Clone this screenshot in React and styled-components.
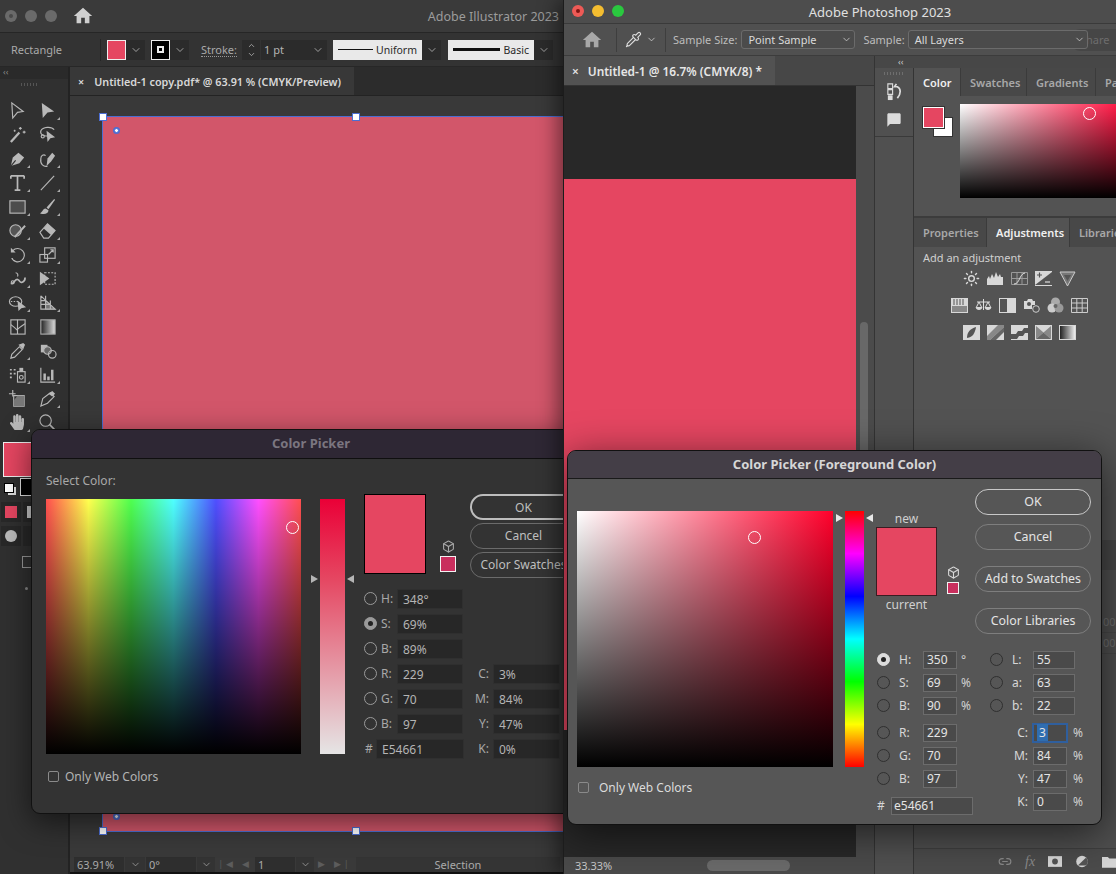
import React from "react";
import styled, { createGlobalStyle } from "styled-components";
import { ChevronDown, ChevronUp, Pipette, Sun, Box, Link2 } from "lucide-react";
import { MdHome, MdChatBubble } from "react-icons/md";
import { FaHandPaper } from "react-icons/fa";

const PINK = "#e54661";

const Global = createGlobalStyle`
  html, body { margin: 0; padding: 0; background: #222; overflow: hidden; }
  body { font-family: "Noto Sans", "Open Sans", sans-serif; font-size: 12px; }
`;

const Desktop = styled.div`
  position: relative;
  width: 1116px;
  height: 874px;
  overflow: hidden;
  background: #222;
`;

/* ---------- bits shared by both apps ---------- */

const Lights = styled.div`
  display: flex;
  gap: ${(p) => p.$gap}px;
`;
const Light = styled.span`
  width: 12px;
  height: 12px;
  border-radius: 50%;
  background: ${(p) => p.$color};
  display: flex;
  align-items: center;
  justify-content: center;
  &::after {
    content: "";
    width: 4px;
    height: 4px;
    border-radius: 50%;
    background: ${(p) => p.$dot || "transparent"};
  }
`;
const Marker = styled.span`
  position: absolute;
  left: ${(p) => p.$x}px;
  top: ${(p) => p.$y}px;
  width: 11px;
  height: 11px;
  margin: -6px 0 0 -6px;
  border: 1px solid #fff;
  border-radius: 50%;
`;
const Arrow = styled.span`
  position: absolute;
  top: ${(p) => p.$top}px;
  ${(p) => (p.$side === "left" ? "left: -9px;" : "right: -9px;")}
  width: 0;
  height: 0;
  border-top: 4px solid transparent;
  border-bottom: 4px solid transparent;
  ${(p) =>
    p.$side === "left"
      ? `border-left: 7px solid ${p.$color};`
      : `border-right: 7px solid ${p.$color};`}
`;

/* ---------- Illustrator window ---------- */

const AiWindow = styled.div`
  position: absolute;
  left: 0;
  top: 0;
  width: 564px;
  height: 874px;
  display: flex;
  flex-direction: column;
  overflow: hidden;
  background: #323232;
  color: #b4b4b4;
`;
const AiTitleBar = styled.div`
  flex: 0 0 33px;
  display: flex;
  align-items: center;
  padding: 0 5px;
  background: #3a3a3a;
  border-bottom: 1px solid #262626;
  box-sizing: border-box;
`;
const AiHome = styled.span`
  display: flex;
  margin-left: 15px;
  color: #cfcfcf;
`;
const AiTitle = styled.span`
  margin-left: auto;
  font-size: 12.5px;
  color: #9c9c9c;
`;
const AiOptions = styled.div`
  flex: 0 0 34px;
  display: flex;
  align-items: center;
  background: #333;
  border-bottom: 1px solid #272727;
  box-sizing: border-box;
  font-size: 11px;
`;
const OptName = styled.span`
  width: 89px;
  margin-left: 11px;
  color: #aaa;
`;
const OptDivider = styled.span`
  width: 1px;
  height: 22px;
  background: #262626;
  margin-right: 6px;
`;
const OptSwatch = styled.span`
  box-sizing: border-box;
  width: 19px;
  height: 20px;
  background: ${(p) => p.$color};
  border: 1px solid #eee;
  display: flex;
  align-items: center;
  justify-content: center;
`;
const StrokeMark = styled.span`
  width: 3px;
  height: 3px;
  background: #000;
  border: 2px solid #eee;
`;
const ChevBox = styled.span`
  width: ${(p) => p.$w || 19}px;
  height: 20px;
  margin-right: ${(p) => p.$mr || 0}px;
  display: flex;
  align-items: center;
  justify-content: center;
  background: #2b2b2b;
  color: #bbb;
`;
const StrokeLabel = styled.span`
  margin: 0 5px 0 6px;
  color: #aaa;
  border-bottom: 1px dotted #999;
  line-height: 13px;
`;
const Spinner = styled.span`
  width: 18px;
  height: 20px;
  background: #2b2b2b;
  display: flex;
  flex-direction: column;
  align-items: center;
  justify-content: center;
  color: #bbb;
`;
const StrokeValue = styled.span`
  width: 47px;
  height: 20px;
  line-height: 19px;
  margin-left: 1px;
  padding-left: 3px;
  box-sizing: border-box;
  background: #2b2b2b;
`;
const Profile = styled.span`
  width: ${(p) => p.$w}px;
  height: 20px;
  display: flex;
  align-items: center;
  justify-content: space-between;
  padding: 0 5px;
  box-sizing: border-box;
  background: #e9e9e9;
  color: #2a2a2a;
  font-size: 10.5px;
`;
const ProfileLine = styled.span`
  width: ${(p) => p.$w}px;
  height: ${(p) => p.$h}px;
  background: #111;
`;
const AiMain = styled.div`
  flex: 1;
  min-height: 0;
  display: flex;
`;
const ToolPanel = styled.div`
  flex: 0 0 68px;
  border-right: 2px solid #232323;
  background: #303030;
  display: flex;
  flex-direction: column;
`;
const Collapse = styled.div`
  height: 12px;
  line-height: 10px;
  padding-left: 3px;
  font-size: 9px;
  color: #888;
  background: #2a2a2a;
`;
const Grip = styled.div`
  width: 18px;
  height: 3px;
  margin: 4px 0 12px 21px;
  background: repeating-linear-gradient(to right, #555 0 1px, transparent 1px 3px);
`;
const ToolGrid = styled.div`
  display: grid;
  grid-template-columns: 30px 30px;
  grid-auto-rows: 24px;
  padding-left: 2px;
`;
const Tool = styled.div`
  position: relative;
  display: flex;
  align-items: center;
  justify-content: center;
  color: #b8b8b8;
  ${(p) =>
    p.$corner &&
    `&::after {
      content: "";
      position: absolute;
      right: 2px;
      bottom: 2px;
      border-left: 3px solid transparent;
      border-bottom: 3px solid #aaa;
    }`}
`;
const ToolSvg = styled.svg`
  width: 19px;
  height: 19px;
  fill: none;
  stroke: currentColor;
  stroke-width: 1.2;
`;
const FillSwatch = styled.div`
  width: 40px;
  height: 33px;
  margin: 8px 0 0 3px;
  background: ${PINK};
  border: 1px solid #eee;
`;
const DefaultRow = styled.div`
  display: flex;
  align-items: flex-start;
  gap: 6px;
  margin: 1px 0 0 4px;
`;
const DefaultIcon = styled.span`
  width: 8px;
  height: 8px;
  margin-top: 5px;
  background: #fff;
  border: 1px solid #000;
  box-shadow: 3px 3px 0 -1px #ddd;
`;
const BlackBox = styled.span`
  width: 14px;
  height: 16px;
  background: #000;
  border: 1px solid #ddd;
`;
const ModeRow = styled.div`
  display: flex;
  gap: 2px;
  margin: ${(p) => p.$mt}px 0 0 1px;
`;
const ModeCell = styled.span`
  width: 20px;
  height: 20px;
  background: #282828;
  display: flex;
  align-items: center;
  justify-content: center;
`;
const ModeChip = styled.span`
  width: 12px;
  height: 12px;
  background: ${(p) => p.$color};
  border-radius: ${(p) => p.$round || 0};
`;
const MiniFrame = styled.span`
  width: 10px;
  height: 10px;
  margin: 10px 0 0 22px;
  border: 1px solid #999;
`;
const MoreDot = styled.span`
  width: 3px;
  height: 3px;
  margin: 19px 0 0 25px;
  border-radius: 50%;
  background: #888;
`;
const AiWork = styled.div`
  flex: 1;
  min-width: 0;
  display: flex;
  flex-direction: column;
`;
const AiTabRow = styled.div`
  flex: 0 0 29px;
  display: flex;
  background: #2c2c2c;
  border-bottom: 1px solid #232323;
  box-sizing: border-box;
`;
const AiTab = styled.div`
  width: 284px;
  display: flex;
  align-items: center;
  gap: 10px;
  padding-left: 8px;
  box-sizing: border-box;
  background: #383838;
  font-size: 10.8px;
  font-weight: 600;
  color: #d8d8d8;
`;
const AiCanvas = styled.div`
  flex: 1;
  min-height: 0;
  overflow: hidden;
  background: #393939;
  padding: 21px 0 0 33px;
`;
const Artboard = styled.div`
  position: relative;
  width: 560px;
  height: 714px;
  background: #d2566a;
  box-shadow: 0 0 0 1px #4c6ed2;
`;
const Handle = styled.span`
  position: absolute;
  left: ${(p) => p.$x}px;
  top: ${(p) => p.$y}px;
  width: 6px;
  height: 6px;
  margin: -4px 0 0 -4px;
  background: #fff;
  border: 1px solid #4c6ed2;
`;
const CenterDot = styled.span`
  position: absolute;
  left: 14px;
  top: ${(p) => p.$y}px;
  margin: -3px 0 0 -3px;
  width: 3px;
  height: 3px;
  border-radius: 50%;
  background: #fff;
  border: 1px solid #4c6ed2;
  box-shadow: 0 0 0 1px #4c6ed2;
`;
const AiStatus = styled.div`
  flex: 0 0 17px;
  display: flex;
  align-items: flex-start;
  gap: 1px;
  padding-left: 4px;
  background: #393939;
  border-bottom: 2px solid #111;
  box-sizing: border-box;
  font-size: 11px;
  color: #aaa;
`;
const StatusField = styled.span`
  width: ${(p) => p.$w}px;
  height: 15px;
  line-height: 16px;
  padding-left: 3px;
  box-sizing: border-box;
  background: #2e2e2e;
`;
const StatusChev = styled.span`
  width: ${(p) => p.$w || 18}px;
  height: 15px;
  display: flex;
  align-items: center;
  justify-content: center;
  background: #333;
`;
const StatusNav = styled.span`
  width: ${(p) => p.$w}px;
  height: 15px;
  line-height: 14px;
  text-align: center;
  font-size: 9px;
  letter-spacing: 3px;
  color: #5c5c5c;
`;
const StatusMode = styled.span`
  flex: 1;
  height: 15px;
  line-height: 16px;
  margin-right: 4px;
  text-align: center;
  background: #343434;
`;

/* ---------- Illustrator colour picker ---------- */

const AiDialog = styled.div`
  position: absolute;
  left: 31px;
  top: 429px;
  width: 560px;
  height: 385px;
  box-sizing: border-box;
  border: 1px solid #111;
  border-radius: 9px;
  background: #333;
  box-shadow: 0 8px 30px rgba(0, 0, 0, 0.55);
  overflow: hidden;
`;
const AiDialogTitle = styled.div`
  height: 28px;
  line-height: 26px;
  text-align: center;
  background: #2e2734;
  border-bottom: 1px solid #0f0f0f;
  font-size: 13px;
  font-weight: 700;
  color: #7b7680;
`;
const AiDialogBody = styled.div`
  display: flex;
  padding-left: 14px;
`;
const AiLeft = styled.div`
  width: 255px;
`;
const AiPrompt = styled.div`
  height: 16px;
  line-height: 16px;
  margin: 14px 0 10px;
  color: #a8a8a8;
`;
const AiField = styled.div`
  position: relative;
  height: 255px;
  background: linear-gradient(to bottom, transparent, #000),
    linear-gradient(
      to right,
      #ff4f4f,
      #ffff4f 16.67%,
      #4fff4f 33.33%,
      #4fffff 50%,
      #4f4fff 66.67%,
      #ff4fff 83.33%,
      #ff4f4f
    );
`;
const WebColors = styled.label`
  display: flex;
  align-items: center;
  gap: ${(p) => p.$gap}px;
  margin: ${(p) => p.$mt}px 0 0 ${(p) => p.$ml}px;
  color: ${(p) => p.$color};
`;
const Check = styled.span`
  width: 9px;
  height: 9px;
  border: 1px solid #8a8a8a;
  border-radius: 2px;
`;
const AiSlider = styled.div`
  position: relative;
  width: 25px;
  height: 255px;
  margin: 40px 0 0 19px;
  background: linear-gradient(to bottom, #ea0037, ${PINK} 31%, #e5e5e5);
`;
const AiRight = styled.div`
  margin-left: 19px;
  padding-top: 35px;
`;
const AiTop = styled.div`
  display: flex;
  height: 92px;
`;
const AiPreview = styled.div`
  box-sizing: border-box;
  width: 62px;
  height: 80px;
  background: ${PINK};
  border: 1px solid #000;
`;
const GamutCol = styled.div`
  width: 16px;
  margin: ${(p) => p.$mt}px 0 0 ${(p) => p.$ml}px;
  display: flex;
  flex-direction: column;
  align-items: center;
  gap: 3px;
  color: ${(p) => p.$color};
`;
const GamutChip = styled.span`
  box-sizing: border-box;
  width: ${(p) => p.$size}px;
  height: ${(p) => p.$size}px;
  background: #c92f5e;
  border: 1px solid #f2f2f2;
`;
const AiButtons = styled.div`
  margin-left: 14px;
  display: flex;
  flex-direction: column;
  gap: 3px;
`;
const AiButton = styled.div`
  box-sizing: border-box;
  width: 107px;
  height: 26px;
  line-height: 23px;
  text-align: center;
  white-space: nowrap;
  border: 1px solid ${(p) => (p.$primary ? "#bdbdbd" : "#6b6b6b")};
  border-width: ${(p) => (p.$primary ? "2px" : "1px")};
  border-radius: 13px;
  color: #bfbfbf;
`;
const AiForm = styled.div`
  display: flex;
`;
const AiCol = styled.div`
  width: ${(p) => p.$w}px;
  padding-top: ${(p) => p.$pt || 0}px;
`;
const AiRow = styled.div`
  height: 25px;
  display: flex;
  align-items: center;
  color: #a8a8a8;
`;
const Radio = styled.span`
  flex: none;
  box-sizing: border-box;
  width: 13px;
  height: 13px;
  border-radius: 50%;
  border: 1px solid ${(p) => p.$line};
  display: flex;
  align-items: center;
  justify-content: center;
  ${(p) =>
    p.$on &&
    `background: ${p.$line};
     &::after { content: ""; width: 5px; height: 5px; border-radius: 50%; background: #222; }`}
`;
const AiLabel = styled.span`
  width: 16px;
  margin-left: 4px;
`;
const AiInput = styled.div`
  box-sizing: border-box;
  width: ${(p) => p.$w}px;
  height: 20px;
  line-height: 19px;
  padding-left: 5px;
  background: #272727;
  border: 1px solid #2f2f2f;
  color: #b4b4b4;
`;
const AiCmykLabel = styled.span`
  width: 25px;
  margin-right: 4px;
  text-align: right;
`;
const AiHash = styled.span`
  width: 11px;
  margin-left: 1px;
`;

/* ---------- Photoshop window ---------- */

const PsWindow = styled.div`
  position: absolute;
  left: 563px;
  top: 0;
  width: 553px;
  height: 874px;
  display: flex;
  flex-direction: column;
  box-sizing: border-box;
  border-left: 1px solid #1c1c1c;
  background: #505050;
  color: #c8c8c8;
  box-shadow: -6px 0 18px rgba(0, 0, 0, 0.45);
  overflow: hidden;
`;
const PsTitleBar = styled.div`
  position: relative;
  flex: 0 0 24px;
  box-sizing: border-box;
  display: flex;
  align-items: center;
  justify-content: center;
  padding-left: 80px;
  background: #4d4d4d;
  border-bottom: 1px solid #3a3a3a;
  font-size: 13px;
  color: #e0e0e0;
`;
const PsLightsSlot = styled.div`
  position: absolute;
  left: 8px;
  top: 5px;
`;
const PsOptions = styled.div`
  position: relative;
  flex: 0 0 32px;
  box-sizing: border-box;
  display: flex;
  align-items: center;
  background: #505050;
  border-bottom: 1px solid #3c3c3c;
  font-size: 11px;
  color: #bdbdbd;
`;
const PsHome = styled.span`
  display: flex;
  margin-left: 17px;
  width: 35px;
  color: #a8a8a8;
`;
const PsDivider = styled.span`
  width: 1px;
  height: 24px;
  background: #3e3e3e;
`;
const PsTool = styled.span`
  display: flex;
  align-items: center;
  margin-left: 8px;
  gap: 4px;
  width: 40px;
  color: #ddd;
`;
const SampleLabel = styled.span`
  margin-left: ${(p) => p.$ml || 0}px;
`;
const PsSelect = styled.span`
  position: relative;
  z-index: 1;
  box-sizing: border-box;
  width: ${(p) => p.$w}px;
  height: 19px;
  margin: 0 ${(p) => p.$mr}px 0 ${(p) => p.$ml}px;
  display: flex;
  align-items: center;
  justify-content: space-between;
  padding: 0 2px 0 6px;
  border: 1px solid #6b6b6b;
  border-radius: 3px;
  background: #4b4b4b;
  color: #dadada;
`;
const Share = styled.span`
  position: absolute;
  right: -14px;
  top: 5px;
  width: 60px;
  height: 22px;
  line-height: 21px;
  padding-left: 10px;
  box-sizing: border-box;
  border-radius: 11px;
  background: #464646;
  color: #6d6d6d;
`;
const PsMain = styled.div`
  flex: 1;
  min-height: 0;
  display: flex;
`;
const PsDoc = styled.div`
  flex: 0 0 310px;
  display: flex;
  flex-direction: column;
  border-right: 1px solid #343434;
`;
const PsTabRow = styled.div`
  flex: 0 0 30px;
  display: flex;
  box-sizing: border-box;
  background: #474747;
  border-bottom: 1px solid #333;
`;
const PsTab = styled.div`
  width: 211px;
  display: flex;
  align-items: center;
  gap: 9px;
  padding-left: 8px;
  box-sizing: border-box;
  background: #525252;
  font-size: 11.9px;
  font-weight: 600;
  color: #e6e6e6;
`;
const PsDocBody = styled.div`
  flex: 1;
  min-height: 0;
  display: flex;
`;
const PsCanvas = styled.div`
  flex: 1;
  padding-top: 93px;
  background: #282828;
`;
const PsArtboard = styled.div`
  height: 551px;
  background: ${PINK};
`;
const PsVScroll = styled.div`
  flex: 0 0 18px;
  padding: 236px 0 0 4px;
  box-sizing: border-box;
  background: #4b4b4b;
`;
const PsVThumb = styled.div`
  width: 8px;
  height: 200px;
  border-radius: 4px;
  background: #686868;
`;
const PsStatus = styled.div`
  flex: 0 0 17px;
  display: flex;
  align-items: center;
  background: #4a4a4a;
  font-size: 11px;
  color: #c8c8c8;
`;
const PsZoom = styled.span`
  width: 132px;
  padding-left: 11px;
`;
const PsHThumb = styled.span`
  width: 83px;
  height: 11px;
  border-radius: 6px;
  background: #6a6a6a;
`;
const PsSide = styled.div`
  flex: 1;
  min-width: 0;
  display: flex;
  flex-direction: column;
`;
const CollapseRow = styled.div`
  flex: 0 0 12px;
  line-height: 11px;
  padding-left: 23px;
  font-size: 9px;
  color: #ccc;
  background: #474747;
`;
const PsSideBody = styled.div`
  flex: 1;
  min-height: 0;
  display: flex;
`;
const PsStrip = styled.div`
  flex: 0 0 39px;
  display: flex;
  flex-direction: column;
  box-sizing: border-box;
  border-right: 1px solid #343434;
  background: #505050;
`;
const StripTop = styled.div`
  height: 69px;
  box-sizing: border-box;
  border-bottom: 1px solid #3a3a3a;
  display: flex;
  flex-direction: column;
  align-items: center;
  color: #dcdcdc;
`;
const StripGrip = styled.div`
  width: 20px;
  height: 3px;
  margin: 4px 0 7px;
  background: repeating-linear-gradient(to right, #6e6e6e 0 1px, transparent 1px 3px);
`;
const StripChat = styled.span`
  display: flex;
  margin-top: 11px;
`;
const PsPanels = styled.div`
  flex: 1;
  min-width: 0;
  display: flex;
  flex-direction: column;
  overflow: hidden;
  background: #535353;
`;
const PanelTabs = styled.div`
  flex: 0 0 ${(p) => p.$h}px;
  display: flex;
  background: #474747;
  white-space: nowrap;
  font-size: 11px;
  font-weight: 600;
`;
const PanelTab = styled.div`
  flex: none;
  width: ${(p) => p.$w}px;
  box-sizing: border-box;
  padding-left: 9px;
  display: flex;
  align-items: center;
  border-right: 1px solid #3b3b3b;
  background: ${(p) => (p.$active ? "#535353" : "#484848")};
  color: ${(p) => (p.$active ? "#f0f0f0" : "#a8a8a8")};
`;
const ColorPanel = styled.div`
  flex: 0 0 122px;
  display: flex;
  box-sizing: border-box;
  padding: 8px 0 0 9px;
  border-bottom: 2px solid #3c3c3c;
`;
const FgBg = styled.div`
  position: relative;
  width: 37px;
  height: 32px;
`;
const Fg = styled.span`
  position: absolute;
  left: 0;
  top: 3px;
  z-index: 1;
  box-sizing: border-box;
  width: 21px;
  height: 21px;
  background: ${PINK};
  border: 1px solid #fff;
  outline: 1px solid #333;
`;
const Bg = styled.span`
  position: absolute;
  left: 11px;
  top: 14px;
  width: 18px;
  height: 18px;
  background: #fff;
  outline: 1px solid #333;
`;
const PanelField = styled.div`
  position: relative;
  width: 156px;
  height: 94px;
  background: linear-gradient(to bottom, transparent, #000),
    linear-gradient(to right, #fff, #ff1c48);
`;
const AdjustPanel = styled.div`
  flex: 0 0 293px;
  box-sizing: border-box;
  padding-left: 9px;
`;
const AdjustTitle = styled.div`
  height: 22px;
  line-height: 22px;
  font-size: 11px;
  color: #d0d0d0;
`;
const AdjustRow = styled.div`
  display: flex;
  justify-content: center;
  gap: 7px;
  padding-right: 1px;
  margin-top: ${(p) => p.$mt}px;
  color: #d8d8d8;
`;
const AdjustCell = styled.div`
  width: 17px;
  height: 17px;
  display: flex;
`;
const AdjSvg = styled.svg`
  width: 17px;
  height: 17px;
  display: block;
  fill: currentColor;
  stroke: currentColor;
  stroke-width: 0;
`;
const LayerBody = styled.div`
  flex: 1;
  min-height: 0;
  padding-top: 42px;
  box-sizing: border-box;
  background: #4f4f4f;
`;
const LayerRow = styled.div`
  height: 20px;
  line-height: 20px;
  padding-left: 189px;
  border-bottom: 1px solid #474747;
  font-size: 11px;
  color: #6e6e6e;
`;
const LayerFooter = styled.div`
  flex: 0 0 26px;
  display: flex;
  align-items: center;
  gap: 13px;
  padding-left: 84px;
  box-sizing: border-box;
  border-top: 1px solid #3f3f3f;
  background: #4b4b4b;
  color: #d6d6d6;
`;
const FooterIcon = styled.span`
  width: 14px;
  display: flex;
  justify-content: center;
  color: ${(p) => p.$color || "inherit"};
  font-family: "Liberation Serif", serif;
  font-style: italic;
  font-size: 14px;
`;

/* ---------- Photoshop colour picker ---------- */

const PsDialog = styled.div`
  position: absolute;
  left: 3px;
  top: 450px;
  width: 535px;
  height: 375px;
  box-sizing: border-box;
  border: 1px solid #111;
  border-radius: 9px;
  background: #565656;
  color: #dcdcdc;
  box-shadow: 0 8px 40px rgba(0, 0, 0, 0.6);
  overflow: hidden;
`;
const PsDialogTitle = styled.div`
  height: 27px;
  line-height: 27px;
  text-align: center;
  background: #443e47;
  border-bottom: 1px solid #1a1a1a;
  font-size: 13px;
  font-weight: 700;
  color: #d6d6d6;
`;
const PsDialogBody = styled.div`
  display: flex;
  padding-left: 9px;
`;
const PsLeft = styled.div`
  width: 256px;
  padding-top: 32px;
`;
const PsField = styled.div`
  position: relative;
  height: 256px;
  background: linear-gradient(to bottom, transparent, #000),
    linear-gradient(to right, #fff, #ff002b);
`;
const PsSlider = styled.div`
  position: relative;
  width: 19px;
  height: 256px;
  margin: 32px 0 0 12px;
  background: linear-gradient(
    to bottom,
    #ff0000,
    #ff00ff 16.67%,
    #0000ff 33.33%,
    #00ffff 50%,
    #00ff00 66.67%,
    #ffff00 83.33%,
    #ff0000
  );
`;
const PsRight = styled.div`
  margin-left: 12px;
`;
const PsTop = styled.div`
  display: flex;
  height: 169px;
`;
const PsPreviewCol = styled.div`
  width: 61px;
  padding-top: 32px;
  text-align: center;
  line-height: 16px;
  color: #d0d0d0;
`;
const PsPreview = styled.div`
  box-sizing: border-box;
  height: 69px;
  margin: 0 0 1px;
  background: ${PINK};
  border: 1px solid #3a1c22;
`;
const PsButtons = styled.div`
  margin: 10px 0 0 14px;
  display: flex;
  flex-direction: column;
`;
const PsButton = styled.div`
  box-sizing: border-box;
  width: 116px;
  height: 26px;
  margin-top: ${(p) => p.$mt || 0}px;
  line-height: 23px;
  text-align: center;
  font-size: 12.4px;
  border: 1px solid ${(p) => (p.$primary ? "#c8c8c8" : "#7e7e7e")};
  border-radius: 13px;
  color: #e4e4e4;
`;
const PsForm = styled.div`
  display: flex;
`;
const PsCol = styled.div`
  box-sizing: border-box;
  width: ${(p) => p.$w}px;
  margin-left: ${(p) => p.$ml || 0}px;
  padding-left: ${(p) => p.$pl || 0}px;
`;
const PsRow = styled.div`
  height: 23px;
  margin-top: ${(p) => p.$mt || 0}px;
  display: flex;
  align-items: center;
  color: #d6d6d6;
`;
const PsLabel = styled.span`
  width: ${(p) => p.$w}px;
  margin-left: ${(p) => p.$ml || 0}px;
  margin-right: ${(p) => p.$mr || 0}px;
  text-align: ${(p) => p.$align || "left"};
`;
const PsInput = styled.div`
  box-sizing: border-box;
  width: ${(p) => p.$w}px;
  height: 18px;
  line-height: 16px;
  padding-left: ${(p) => p.$pl || 3}px;
  background: #4a4a4a;
  border: 1px solid ${(p) => (p.$focus ? "#2f5f9e" : "#6c6c6c")};
  color: #e4e4e4;
  ${(p) => p.$focus && "box-shadow: 0 0 0 1px #2f5f9e;"}
`;
const Selected = styled.span`
  background: #2f6db0;
  padding: 0 2px;
`;
const PsUnit = styled.span`
  margin-left: ${(p) => p.$ml}px;
  color: #d0d0d0;
`;

/* ---------- icons ---------- */

const G = ({ children }) => <ToolSvg viewBox="0 0 20 20">{children}</ToolSvg>;
const solid = { fill: "currentColor", stroke: "none" };

const TOOLS = [
  [<G><path d="M4 2 16 11 10 12 5 18Z" /></G>, false],
  [<G><path d="M4 2 17 11 10 12 5 18Z" {...solid} /></G>, true],
  [<G><path d="M3 18 12 8" strokeWidth="2.4" /><path d="M13 2v3M11.5 3.5h3M17 6v3M15.5 7.5h3M7 5v2M6 6h2" /></G>, false],
  [<G><path d="M12 11C5 13 2 9 3 6c2-4 11-5 14-1" /><circle cx="5" cy="12" r="1.6" /><path d="M9 6 18 13 13 14 10 18Z" {...solid} /></G>, false],
  [<G><path d="M3 18 5 9 11 4l6 5-5 6Z" {...solid} /><path d="M3 18 8 12" stroke="#303030" /></G>, true],
  [<G><path d="M9 18 10 10 15 4l3 3-4 6Z" {...solid} /><path d="M10 18C6 19 2 16 3 10c0-3 3-5 5-3" /></G>, true],
  [<G><path d="M3 3H17M10 3V18M7 18h6M3 3v3M17 3v3" strokeWidth="1.8" /></G>, true],
  [<G><path d="M3 18 17 3" /></G>, true],
  [<G><rect x="2" y="4" width="16" height="13" fill="#4c4c4c" /></G>, true],
  [<G><path d="M17 2 9 11l2 2 7-10Z" {...solid} /><path d="M8 12c-3 0-3 4-6 5 4 2 9 1 9-3Z" {...solid} /></G>, true],
  [<G><circle cx="8" cy="10" r="6" fill="#555" /><path d="M7 17 18 5" strokeWidth="2" /></G>, true],
  [<G><path d="M2 12 10 3l8 7-7 8H6Z" /><path d="M10 3l8 7-4 5-8-7Z" {...solid} /></G>, true],
  [<G><path d="M5 6a7 7 0 1 1-1 8" /><path d="M3 3v5h5" {...solid} /><path d="M4 14l3 3" strokeDasharray="1.5 1.5" /></G>, true],
  [<G><rect x="2" y="10" width="8" height="8" /><rect x="7" y="3" width="11" height="11" /><path d="M11 10l5-5M13 5h3v3" /></G>, true],
  [<G><path d="M3 15c3 2 4-5 7-4s2 4 5 3 3-4 3-5" strokeWidth="1.8" /><circle cx="5" cy="14" r="1.6" /><path d="M8 4c2 0 3 2 2 4" /></G>, true],
  [<G><path d="M2 3 12 10 2 17Z" {...solid} /><rect x="7" y="4" width="11" height="12" strokeDasharray="2 1.5" /></G>, false],
  [<G><ellipse cx="8" cy="9" rx="6.5" ry="5" /><path d="M3 9h8" strokeDasharray="1.5 1.5" /><path d="M10 8 19 15 14 16 11 19Z" {...solid} /></G>, true],
  [<G><path d="M3 3V17H18L3 3M8 3v14M13 8v9M3 8h5M3 12h10" /><path d="M8 8 18 17H8Z" fill="currentColor" opacity=".5" /></G>, true],
  [<G><rect x="3" y="3" width="15" height="15" /><path d="M10 3v15M3 8c4 3 4 3 7 6M18 7c-4 3-5 3-8 6" /></G>, false],
  [<G><defs><linearGradient id="tg"><stop offset="0" stopColor="#222" /><stop offset="1" stopColor="#ddd" /></linearGradient></defs><rect x="3" y="3" width="15" height="15" fill="url(#tg)" stroke="#aaa" /></G>, false],
  [<G><path d="M3 18l1-4 8-8 3 3-8 8Z" /><path d="M11 4l5 5 1-3 1-2-2-2-2 1Z" {...solid} /></G>, true],
  [<G><rect x="3" y="4" width="7" height="8" {...solid} /><circle cx="10" cy="10" r="4" fill="#666" /><circle cx="15" cy="14" r="4" /></G>, false],
  [<G><rect x="10" y="7" width="8" height="11" /><circle cx="14" cy="13" r="2" /><rect x="12" y="3" width="4" height="4" {...solid} /><path d="M2 5h2M6 5h2M2 9h2M6 9h2M2 13h2" strokeWidth="1.8" /></G>, true],
  [<G><path d="M3 3V18H18" /><path d="M7 9V16M11 12V16M15 5V16" strokeWidth="2.6" /></G>, true],
  [<G><path d="M6 7h11v11H6Z" /><path d="M10 7h7v11H6v-6Z" fill="#777" stroke="none" /><path d="M1 5H8M5 1V8" /></G>, false],
  [<G><path d="M3 18l2-8 8-6 4 4-7 7Z" /><path d="M11 5l4-3 3 3-3 3Z" {...solid} /></G>, true],
  [<FaHandPaper size={16} />, true],
  [<G><circle cx="8" cy="8" r="6" /><path d="M12 12l6 6" strokeWidth="1.6" /></G>, false],
];

const A = ({ children }) => <AdjSvg viewBox="0 0 17 17">{children}</AdjSvg>;
const dark = "#545454";

const ADJUST_ROWS = [
  [
    <Sun size={17} />,
    <A><path d="M0 15V9l2-3 1 3 2-5 2 4 2-6 2 5 2-3 1 3 2 0v8Z" /></A>,
    <A><path d="M.5 2.500h16v12H.5ZM6 2.500v12M11 2.500v12M.5 8.500h16" fill="none" stroke="#9a9a9a" strokeWidth="1" /><path d="M3 14c6 0 5-10 11-11" fill="none" stroke="#ddd" strokeWidth="1" /></A>,
    <A><rect y="1" width="17" height="15" /><path d="M17 2 0 15h17Z" fill={dark} /><path d="M2 5h5M4.500 2.500v5" stroke={dark} strokeWidth="1.200" /><path d="M10 12h5" stroke="#ddd" strokeWidth="1.200" /></A>,
    <A><path d="M1 2h15L8.500 16Z" fill="#777" stroke="#ccc" strokeWidth="1" /><path d="M5 5h7L8.500 11Z" fill="#555" /></A>,
  ],
  [
    <A><rect y="1" width="17" height="15" /><path d="M3 2v6M6 2v6M9 2v6M12 2v6" stroke={dark} strokeWidth="1" /><path d="M1 9h15v6H1Z" fill="#888" /></A>,
    <A><path d="M8.500 2v11M2 5h13M4 5l-3 6h6ZM13 5l-3 6h6Z" fill="none" stroke="#ddd" strokeWidth="1" /><path d="M1 10h6a3 3 0 0 1-6 0ZM10 10h6a3 3 0 0 1-6 0Z" /></A>,
    <A><rect y="1" width="17" height="15" /><rect x="1" y="2" width="7" height="13" fill={dark} /></A>,
    <A><path d="M1 4h3l1-2h4l1 2h2v4H9v4H1Z" /><circle cx="6" cy="7" r="2" fill={dark} /><circle cx="13" cy="12" r="3.300" fill="none" stroke="#ccc" strokeWidth="1" /></A>,
    <A><circle cx="8.500" cy="5" r="4.500" fill="#aaa" /><circle cx="5" cy="11" r="4.500" fill="#ccc" /><circle cx="12" cy="11" r="4.500" fill="#999" /><circle cx="8.500" cy="9" r="2" fill="#666" /></A>,
    <A><path d="M.5 1.500h16v14H.5ZM5.800 1.500v14M11.200 1.500v14M.5 6h16M.5 11h16" fill="none" stroke="#ccc" strokeWidth="1" /></A>,
  ],
  [
    <A><rect y="1" width="17" height="15" /><path d="M4 14c0-6 3-9 9-11-1 6-3 10-9 11Z" fill={dark} /></A>,
    <A><rect y="1" width="17" height="15" /><path d="M0 12 11 1h6v2L3 16H0Z" fill="#888" /><path d="M3 16 17 3v5l-8 8Z" fill="#666" /></A>,
    <A><rect y="1" width="17" height="15" /><path d="M0 10h5l2-3h4l2-3h4v5h-3l-2 3H8l-2 3H0Z" fill={dark} /></A>,
    <A><rect y="1" width="17" height="15" /><path d="M1 2 8.500 8.500 1 15ZM16 2 8.500 8.500 16 15Z" fill="#888" /><path d="M1 15 8.500 8.500 16 15Z" fill="#666" /></A>,
    <A><defs><linearGradient id="ag"><stop offset="0" stopColor="#222" /><stop offset="1" stopColor="#eee" /></linearGradient></defs><rect y="1" width="17" height="15" /><rect x="1" y="2" width="15" height="13" fill="url(#ag)" /></A>,
  ],
];

const Chev = ({ size = 12 }) => <ChevronDown size={size} strokeWidth={1.6} />;

const AI_ROWS = [
  ["H:", "348°", false],
  ["S:", "69%", true],
  ["B:", "89%", false],
  ["R:", "229", false],
  ["G:", "70", false],
  ["B:", "97", false],
];
const AI_CMYK = [
  ["C:", "3%"],
  ["M:", "84%"],
  ["Y:", "47%"],
  ["K:", "0%"],
];
const PS_HSB = [
  ["H:", "350", "°", true],
  ["S:", "69", "%", false],
  ["B:", "90", "%", false],
];
const PS_RGB = [
  ["R:", "229"],
  ["G:", "70"],
  ["B:", "97"],
];
const PS_LAB = [
  ["L:", "55"],
  ["a:", "63"],
  ["b:", "22"],
];
const PS_CMYK = [
  ["M:", "84"],
  ["Y:", "47"],
  ["K:", "0"],
];

function Illustrator() {
  return (
    <AiWindow>
      <AiTitleBar>
        <Lights $gap={8}>
          <Light $color="#6a6a6a" $dot="#4a4a4a" />
          <Light $color="#6a6a6a" />
          <Light $color="#6a6a6a" />
        </Lights>
        <AiHome>
          <MdHome size={22} />
        </AiHome>
        <AiTitle>Adobe Illustrator 2023</AiTitle>
      </AiTitleBar>
      <AiOptions>
        <OptName>Rectangle</OptName>
        <OptDivider />
        <OptSwatch $color={PINK} />
        <ChevBox $mr={6}><Chev /></ChevBox>
        <OptSwatch $color="#000"><StrokeMark /></OptSwatch>
        <ChevBox $mr={6}><Chev /></ChevBox>
        <StrokeLabel>Stroke:</StrokeLabel>
        <Spinner>
          <ChevronUp size={9} />
          <ChevronDown size={9} />
        </Spinner>
        <StrokeValue>1 pt</StrokeValue>
        <ChevBox $mr={6}><Chev /></ChevBox>
        <Profile $w={89}><ProfileLine $w={35} $h={1.5} />Uniform</Profile>
        <ChevBox $mr={7}><Chev /></ChevBox>
        <Profile $w={86}><ProfileLine $w={47} $h={2.5} />Basic</Profile>
        <ChevBox><Chev /></ChevBox>
      </AiOptions>
      <AiMain>
        <ToolPanel>
          <Collapse>&lsaquo;&lsaquo;</Collapse>
          <Grip />
          <ToolGrid>
            {TOOLS.map(([icon, corner], i) => (
              <Tool key={i} $corner={corner}>{icon}</Tool>
            ))}
          </ToolGrid>
          <FillSwatch />
          <DefaultRow>
            <DefaultIcon />
            <BlackBox />
          </DefaultRow>
          <ModeRow $mt={6}>
            <ModeCell><ModeChip $color={PINK} /></ModeCell>
            <ModeCell><ModeChip $color="#ccc" /></ModeCell>
          </ModeRow>
          <ModeRow $mt={4}>
            <ModeCell><ModeChip $color="#bbb" $round="50%" /></ModeCell>
            <ModeCell />
          </ModeRow>
          <MiniFrame />
          <MoreDot />
        </ToolPanel>
        <AiWork>
          <AiTabRow>
            <AiTab>
              <span>&times;</span>
              Untitled-1 copy.pdf* @ 63.91 % (CMYK/Preview)
            </AiTab>
          </AiTabRow>
          <AiCanvas>
            <Artboard>
              <Handle $x={0} $y={0} />
              <Handle $x={253} $y={0} />
              <Handle $x={0} $y={714} />
              <Handle $x={253} $y={714} />
              <CenterDot $y={14} />
              <CenterDot $y={700} />
            </Artboard>
          </AiCanvas>
          <AiStatus>
            <StatusField $w={50}>63.91%</StatusField>
            <StatusChev $w={20}><Chev size={11} /></StatusChev>
            <StatusField $w={50}>0°</StatusField>
            <StatusChev><Chev size={11} /></StatusChev>
            <StatusNav $w={38}>|◀ ◀</StatusNav>
            <StatusField $w={40}>1</StatusField>
            <StatusChev><Chev size={11} /></StatusChev>
            <StatusNav $w={40}>▶ ▶|</StatusNav>
            <StatusMode>Selection</StatusMode>
          </AiStatus>
        </AiWork>
      </AiMain>
      <AiDialog>
        <AiDialogTitle>Color Picker</AiDialogTitle>
        <AiDialogBody>
          <AiLeft>
            <AiPrompt>Select Color:</AiPrompt>
            <AiField>
              <Marker $x={246} $y={28} />
            </AiField>
            <WebColors $mt={14} $ml={2} $gap={6} $color="#b4b4b4">
              <Check />
              Only Web Colors
            </WebColors>
          </AiLeft>
          <AiSlider>
            <Arrow $side="left" $top={76} $color="#b5b5b5" />
            <Arrow $side="right" $top={76} $color="#b5b5b5" />
          </AiSlider>
          <AiRight>
            <AiTop>
              <AiPreview />
              <GamutCol $mt={46} $ml={14} $color="#aaa">
                <Box size={13} />
                <GamutChip $size={16} />
              </GamutCol>
              <AiButtons>
                <AiButton $primary>OK</AiButton>
                <AiButton>Cancel</AiButton>
                <AiButton>Color Swatches</AiButton>
              </AiButtons>
            </AiTop>
            <AiForm>
              <AiCol $w={100}>
                {AI_ROWS.map(([label, value, on], i) => (
                  <AiRow key={i}>
                    <Radio $line="#9a9a9a" $on={on} />
                    <AiLabel>{label}</AiLabel>
                    <AiInput $w={66}>{value}</AiInput>
                  </AiRow>
                ))}
                <AiRow>
                  <AiHash>#</AiHash>
                  <AiInput $w={88}>E54661</AiInput>
                </AiRow>
              </AiCol>
              <AiCol $w={96} $pt={75}>
                {AI_CMYK.map(([label, value]) => (
                  <AiRow key={label}>
                    <AiCmykLabel>{label}</AiCmykLabel>
                    <AiInput $w={67}>{value}</AiInput>
                  </AiRow>
                ))}
              </AiCol>
            </AiForm>
          </AiRight>
        </AiDialogBody>
      </AiDialog>
    </AiWindow>
  );
}

function Photoshop() {
  return (
    <PsWindow>
      <PsTitleBar>
        <PsLightsSlot>
          <Lights $gap={8}>
            <Light $color="#ed5a56" $dot="#7d1512" />
            <Light $color="#f4bd30" />
            <Light $color="#2ac83f" />
          </Lights>
        </PsLightsSlot>
        Adobe Photoshop 2023
      </PsTitleBar>
      <PsOptions>
        <PsHome><MdHome size={22} /></PsHome>
        <PsDivider />
        <PsTool>
          <Pipette size={17} strokeWidth={1.6} />
          <Chev size={11} />
        </PsTool>
        <PsDivider />
        <SampleLabel $ml={7}>Sample Size:</SampleLabel>
        <PsSelect $w={114} $ml={4} $mr={8}>Point Sample<Chev size={11} /></PsSelect>
        <SampleLabel>Sample:</SampleLabel>
        <PsSelect $w={180} $ml={3} $mr={0}>All Layers<Chev size={11} /></PsSelect>
        <Share>Share</Share>
      </PsOptions>
      <PsMain>
        <PsDoc>
          <PsTabRow>
            <PsTab>
              <span>&times;</span>
              Untitled-1 @ 16.7% (CMYK/8) *
            </PsTab>
          </PsTabRow>
          <PsDocBody>
            <PsCanvas>
              <PsArtboard />
            </PsCanvas>
            <PsVScroll>
              <PsVThumb />
            </PsVScroll>
          </PsDocBody>
          <PsStatus>
            <PsZoom>33.33%</PsZoom>
            <PsHThumb />
          </PsStatus>
        </PsDoc>
        <PsSide>
          <CollapseRow>&lsaquo;&lsaquo;</CollapseRow>
          <PsSideBody>
            <PsStrip>
              <StripTop>
                <StripGrip />
                <ToolSvg viewBox="0 0 20 20">
                  <path d="M3 2h5v5H3ZM3 8h5v5H3Z" />
                  <path d="M3 14h5v5H3Z" {...solid} />
                  <path d="M12 2l-2 3h3c4 2 4 7 0 12" strokeWidth="1.8" />
                </ToolSvg>
                <StripChat><MdChatBubble size={16} /></StripChat>
              </StripTop>
            </PsStrip>
            <PsPanels>
              <PanelTabs $h={28}>
                <PanelTab $w={47} $active>Color</PanelTab>
                <PanelTab $w={66}>Swatches</PanelTab>
                <PanelTab $w={69}>Gradients</PanelTab>
                <PanelTab $w={40}>Patterns</PanelTab>
              </PanelTabs>
              <ColorPanel>
                <FgBg>
                  <Fg />
                  <Bg />
                </FgBg>
                <PanelField>
                  <Marker $x={129} $y={9} />
                </PanelField>
              </ColorPanel>
              <PanelTabs $h={29}>
                <PanelTab $w={73}>Properties</PanelTab>
                <PanelTab $w={83} $active>Adjustments</PanelTab>
                <PanelTab $w={60}>Libraries</PanelTab>
              </PanelTabs>
              <AdjustPanel>
                <AdjustTitle>Add an adjustment</AdjustTitle>
                {ADJUST_ROWS.map((row, r) => (
                  <AdjustRow key={r} $mt={r === 0 ? 1 : 10}>
                    {row.map((icon, i) => (
                      <AdjustCell key={i}>{icon}</AdjustCell>
                    ))}
                  </AdjustRow>
                ))}
              </AdjustPanel>
              <PanelTabs $h={30} />
              <LayerBody>
                <LayerRow>00</LayerRow>
                <LayerRow>00</LayerRow>
              </LayerBody>
              <LayerFooter>
                <FooterIcon $color="#8a8a8a"><Link2 size={15} /></FooterIcon>
                <FooterIcon $color="#8a8a8a">fx</FooterIcon>
                <FooterIcon>
                  <A><rect y="2" width="17" height="13" /><circle cx="8.500" cy="8.500" r="3.500" fill={dark} /></A>
                </FooterIcon>
                <FooterIcon>
                  <A><circle cx="8.500" cy="8.500" r="7" /><path d="M3.500 13.500 13.500 3.500A7 7 0 0 1 13.500 13.500Z" fill={dark} /></A>
                </FooterIcon>
                <FooterIcon>
                  <A><path d="M0 3h7l2 2h8v11H0Z" /></A>
                </FooterIcon>
              </LayerFooter>
            </PsPanels>
          </PsSideBody>
        </PsSide>
      </PsMain>
      <PsDialog>
        <PsDialogTitle>Color Picker (Foreground Color)</PsDialogTitle>
        <PsDialogBody>
          <PsLeft>
            <PsField>
              <Marker $x={177} $y={26} />
            </PsField>
            <WebColors $mt={12} $ml={1} $gap={10} $color="#dcdcdc">
              <Check />
              Only Web Colors
            </WebColors>
          </PsLeft>
          <PsSlider>
            <Arrow $side="left" $top={3} $color="#e8e8e8" />
            <Arrow $side="right" $top={3} $color="#e8e8e8" />
          </PsSlider>
          <PsRight>
            <PsTop>
              <PsPreviewCol>
                new
                <PsPreview />
                current
              </PsPreviewCol>
              <GamutCol $mt={87} $ml={8} $color="#d8d8d8">
                <Box size={13} />
                <GamutChip $size={12} />
              </GamutCol>
              <PsButtons>
                <PsButton $primary>OK</PsButton>
                <PsButton $mt={9}>Cancel</PsButton>
                <PsButton $mt={16}>Add to Swatches</PsButton>
                <PsButton $mt={16}>Color Libraries</PsButton>
              </PsButtons>
            </PsTop>
            <PsForm>
              <PsCol $w={97} $pl={1}>
                {PS_HSB.map(([label, value, unit, on]) => (
                  <PsRow key={label}>
                    <Radio $line={on ? "#dcdcdc" : "#2f2f2f"} $on={on} />
                    <PsLabel $w={24} $ml={9}>{label}</PsLabel>
                    <PsInput $w={34}>{value}</PsInput>
                    <PsUnit $ml={4}>{unit}</PsUnit>
                  </PsRow>
                ))}
                {PS_RGB.map(([label, value], i) => (
                  <PsRow key={label} $mt={i === 0 ? 4 : 0}>
                    <Radio $line="#2f2f2f" />
                    <PsLabel $w={24} $ml={9}>{label}</PsLabel>
                    <PsInput $w={34}>{value}</PsInput>
                  </PsRow>
                ))}
                <PsRow $mt={4}>
                  <PsLabel $w={14}>#</PsLabel>
                  <PsInput $w={82} $pl={2}>e54661</PsInput>
                </PsRow>
              </PsCol>
              <PsCol $w={105} $ml={17}>
                {PS_LAB.map(([label, value]) => (
                  <PsRow key={label}>
                    <Radio $line="#2f2f2f" />
                    <PsLabel $w={21} $ml={9}>{label}</PsLabel>
                    <PsInput $w={42}>{value}</PsInput>
                  </PsRow>
                ))}
                <PsRow $mt={4}>
                  <PsLabel $w={38} $mr={5} $align="right">C:</PsLabel>
                  <PsInput $w={34} $focus><Selected>3</Selected></PsInput>
                  <PsUnit $ml={6}>%</PsUnit>
                </PsRow>
                {PS_CMYK.map(([label, value]) => (
                  <PsRow key={label}>
                    <PsLabel $w={38} $mr={5} $align="right">{label}</PsLabel>
                    <PsInput $w={34}>{value}</PsInput>
                    <PsUnit $ml={6}>%</PsUnit>
                  </PsRow>
                ))}
              </PsCol>
            </PsForm>
          </PsRight>
        </PsDialogBody>
      </PsDialog>
    </PsWindow>
  );
}

export default function App() {
  return (
    <Desktop>
      <Global />
      <Illustrator />
      <Photoshop />
    </Desktop>
  );
}
